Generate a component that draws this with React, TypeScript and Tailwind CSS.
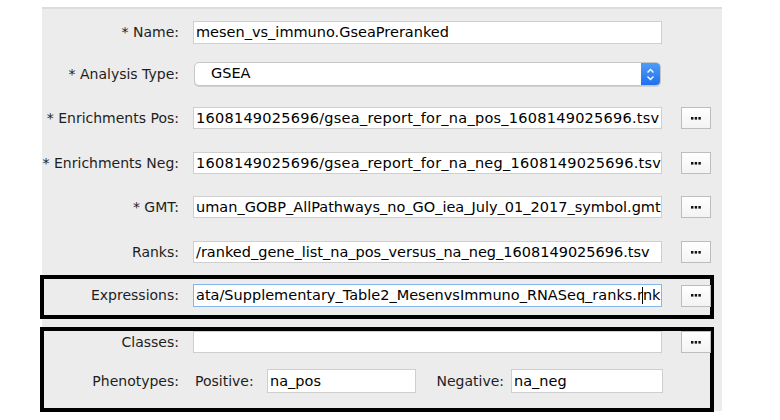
import React from 'react';

const font = { fontFamily: '"DejaVu Sans", "Liberation Sans", sans-serif' };

function Dots() {
  return (
    <svg width="10" height="3" viewBox="0 0 10 3">
      <rect x="0" y="0" width="2.4" height="2.6" fill="#111" />
      <rect x="3.7" y="0" width="2.4" height="2.6" fill="#111" />
      <rect x="7.4" y="0" width="2.4" height="2.6" fill="#111" />
    </svg>
  );
}

function BrowseButton() {
  return (
    <div className="ml-[19px] flex h-[22px] w-[30px] shrink-0 items-center justify-center border border-[#bdbdbd] bg-gradient-to-b from-white to-[#f3f3f3]">
      <Dots />
    </div>
  );
}

function Field({
  value,
  h = 'h-[22px]',
  focus = false,
  w = 'w-[469px]',
  wide = false,
  children,
}: {
  value?: string;
  h?: string;
  focus?: boolean;
  w?: string;
  wide?: boolean;
  children?: React.ReactNode;
}) {
  return (
    <div
      className={`${w} ${h} shrink-0 overflow-hidden whitespace-nowrap bg-white pl-[2px] text-[14.5px] leading-none text-black flex items-center ${
        focus ? 'border border-[#86b6ee]' : 'border border-[#cfcfcf]'
      } ${wide ? 'tracking-[0.25px]' : ''}`}
    >
      {children ?? value}
    </div>
  );
}

function Label({ text, w = 'w-[137px]' }: { text: string; w?: string }) {
  return (
    <div className={`${w} shrink-0 text-right text-[14px] text-[#1e1e1e]`}>{text}</div>
  );
}

function Row({
  label,
  value,
  className = '',
  wide = false,
}: {
  label: string;
  value: string;
  className?: string;
  wide?: boolean;
}) {
  return (
    <div className={`flex items-center ${className}`}>
      <Label text={label} />
      <div className="ml-[14px]">
        <Field value={value} wide={wide} />
      </div>
      <BrowseButton />
    </div>
  );
}

export default function App() {
  return (
    <div className="h-[420px] w-[780px] bg-white pt-[7px]" style={font}>
      <div className="ml-[42px] h-[404px] w-[680px] border-t-[2px] border-[#dcdcdc] bg-[#ececec]">
        {/* Name */}
        <div className="mt-[12px] flex items-center">
          <Label text="* Name:" />
          <div className="ml-[14px]">
            <Field value="mesen_vs_immuno.GseaPreranked" h="h-[23px]" />
          </div>
        </div>

        {/* Analysis type */}
        <div className="mt-[18px] flex items-center">
          <Label text="* Analysis Type:" />
          <div className="ml-[15px] flex h-[24px] w-[467px] items-stretch overflow-hidden rounded-[5px] border border-[#c6c6c6] bg-white shadow-[0_1px_0_#d0d0d0]">
            <div className="flex flex-1 items-center pl-[16px] text-[14.5px] text-black">GSEA</div>
            <div className="flex w-[19px] items-center justify-center bg-gradient-to-b from-[#4f9cf7] to-[#1d6ff1]">
              <svg width="9" height="15" viewBox="0 0 9 15">
                <path d="M1.5 5.5 L4.5 2.5 L7.5 5.5" fill="none" stroke="white" strokeWidth="1.4" />
                <path d="M1.5 9.5 L4.5 12.5 L7.5 9.5" fill="none" stroke="white" strokeWidth="1.4" />
              </svg>
            </div>
          </div>
        </div>

        <Row
          className="mt-[21px]"
          label="* Enrichments Pos:"
          value="1608149025696/gsea_report_for_na_pos_1608149025696.tsv"
          wide
        />
        <Row
          className="mt-[23px]"
          label="* Enrichments Neg:"
          value="1608149025696/gsea_report_for_na_neg_1608149025696.tsv"
          wide
        />
        <Row
          className="mt-[22px]"
          label="* GMT:"
          value="uman_GOBP_AllPathways_no_GO_iea_July_01_2017_symbol.gmt"
        />
        <Row
          className="mt-[23px]"
          label="Ranks:"
          value="/ranked_gene_list_na_pos_versus_na_neg_1608149025696.tsv"
        />

        {/* Expressions (highlighted) */}
        <div className="-ml-[2px] mt-[12px] h-[44px] w-[674px] border-[4px] border-black">
          <div className="mt-[5px] flex items-center">
            <Label text="Expressions:" w="w-[135px]" />
            <div className="ml-[14px]">
              <Field h="h-[23px]" focus>
                <span>ata/Supplementary_Table2_MesenvsImmuno_RNASeq_ranks.r</span>
                <span className="mx-[-0.5px] inline-block h-[17px] w-px bg-black" />
                <span>nk</span>
              </Field>
            </div>
            <BrowseButton />
          </div>
        </div>

        {/* Classes + phenotypes (highlighted) */}
        <div className="-ml-[2px] mt-[8px] h-[85px] w-[674px] border-[4px] border-black">
          <div className="flex items-center">
            <Label text="Classes:" w="w-[135px]" />
            <div className="ml-[14px]">
              <Field value="" />
            </div>
            <BrowseButton />
          </div>
          <div className="mt-[16px] flex items-center">
            <Label text="Phenotypes:" w="w-[135px]" />
            <div className="ml-[16px] w-[72px] shrink-0 text-[14px] text-[#1e1e1e]">Positive:</div>
            <Field value="na_pos" w="w-[149px]" h="h-[24px]" />
            <div className="w-[95px] shrink-0 pr-[7px] text-right text-[14px] text-[#1e1e1e]">Negative:</div>
            <Field value="na_neg" w="w-[152px]" h="h-[24px]" />
          </div>
        </div>
      </div>
    </div>
  );
}
